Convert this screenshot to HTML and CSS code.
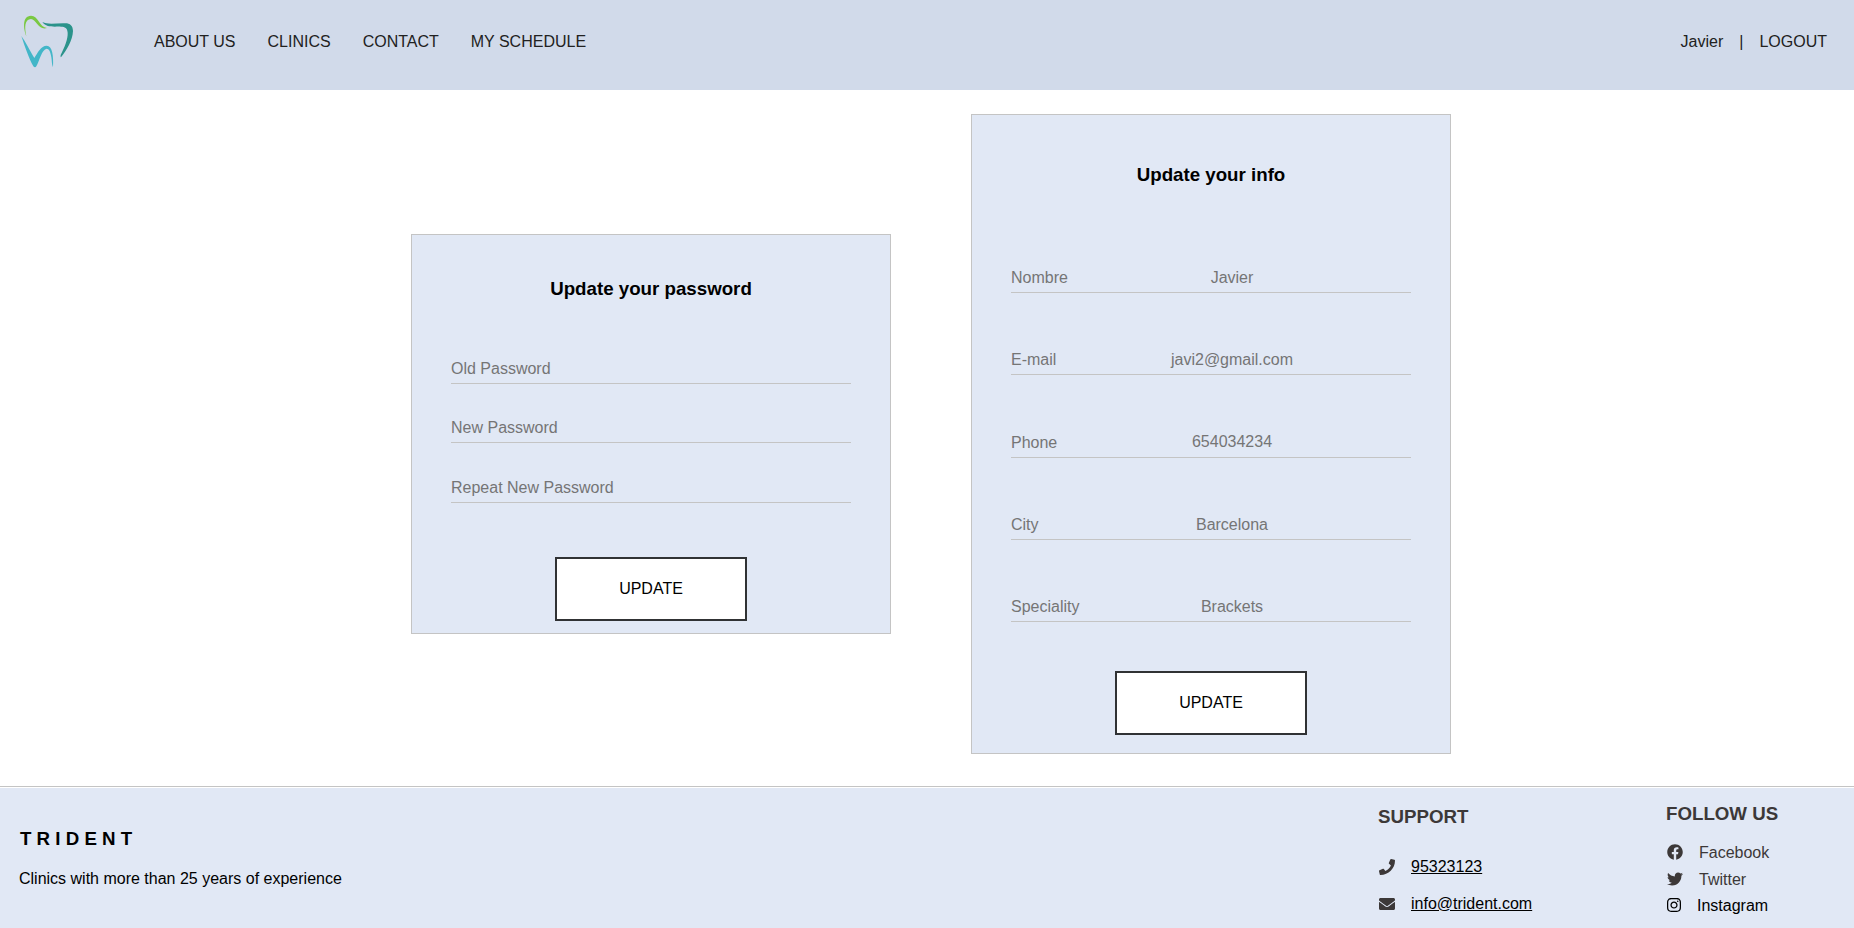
FILE: index.html
```html
<!DOCTYPE html>
<html lang="en">
<head>
<meta charset="utf-8">
<title>Trident</title>
<link rel="stylesheet" href="styles.css">
</head>
<body>
<header class="header">
  <svg class="logo" viewBox="48 36 192 192" aria-label="Trident">
    <path fill="#7ac843" d="M79 109C70 85 66 48 93 47c22 0 26 35 48 37-25 8-33-26-48-27-19 1-20 24-14 52z"/>
    <path fill="#2b938b" d="M127 66c17 9 42 3 69 4 14 0 23 8 23 23-1 27-19 58-36 79-2-1-1-5-1-7 12-24 22-48 21-67-1-14-8-18-20-18-21-1-43 4-56-14z"/>
    <path fill="#43b6c8" d="M64 108c12 16 25 42 39 66 10-16 20-37 37-37 17 1 21 29 19 65-4-9-3-19-5-30-3-18-7-26-14-26-14 1-22 37-31 53-2 4-6 4-9 0-13-23-26-61-36-91z"/>
  </svg>
  <nav class="nav">
    <a>ABOUT US</a><a>CLINICS</a><a>CONTACT</a><a>MY SCHEDULE</a>
  </nav>
  <div class="account"><a>Javier</a><span>|</span><a>LOGOUT</a></div>
</header>

<main class="main">
  <form class="card card-password">
    <h3>Update your password</h3>
    <div class="fields">
      <input class="field" type="password" placeholder="Old Password">
      <input class="field" type="password" placeholder="New Password">
      <input class="field" type="password" placeholder="Repeat New Password">
    </div>
    <button class="update" type="button">UPDATE</button>
  </form>
  <form class="card card-info">
    <h3>Update your info</h3>
    <div class="fields">
      <div class="field info"><span>Nombre</span><span class="value">Javier</span></div>
      <div class="field info"><span>E-mail</span><span class="value">javi2@gmail.com</span></div>
      <div class="field info"><span>Phone</span><span class="value value-phone">654034234</span></div>
      <div class="field info"><span>City</span><span class="value">Barcelona</span></div>
      <div class="field info"><span>Speciality</span><span class="value">Brackets</span></div>
    </div>
    <button class="update" type="button">UPDATE</button>
  </form>
</main>

<footer class="footer">
  <section class="brand">
    <h3>T R I D E N T</h3>
    <p>Clinics with more than 25 years of experience</p>
  </section>
  <section class="support">
    <h3>SUPPORT</h3>
    <div class="contact">
      <svg class="icon" viewBox="0 0 512 512"><path d="M493.4 24.6l-104-24c-11.3-2.6-22.9 3.3-27.5 13.9l-48 112c-4.2 9.8-1.4 21.3 6.9 28l60.6 49.6c-36 76.7-98.9 140.5-177.2 177.2l-49.6-60.6c-6.8-8.3-18.2-11.1-28-6.900l-112 48C3.900 366.500-2 378.100.6 389.400l24 104C27.100 504.200 36.700 512 48 512c256.100 0 464-207.500 464-464 0-11.200-7.700-20.900-18.600-23.400z"/></svg>
      <a>95323123</a>
    </div>
    <div class="contact">
      <svg class="icon" viewBox="0 0 512 512"><path d="M502.300 190.800c3.900-3.100 9.700-.2 9.700 4.700V400c0 26.500-21.500 48-48 48H48c-26.500 0-48-21.500-48-48V195.600c0-5 5.700-7.800 9.700-4.700 22.400 17.400 52.100 39.500 154.100 113.600 21.100 15.400 56.700 47.800 92.200 47.600 35.700.3 72-32.800 92.300-47.600 102-74.100 131.600-96.300 154-113.700zM256 320c23.200.4 56.600-29.200 73.400-41.400 132.700-96.300 142.800-104.700 173.400-128.700 5.800-4.500 9.200-11.500 9.200-18.900v-19c0-26.500-21.500-48-48-48H48c-26.500 0-48 21.500-48 48v19c0 7.400 3.400 14.300 9.200 18.900 30.600 23.900 40.700 32.400 173.400 128.700 16.800 12.200 50.200 41.800 73.400 41.400z"/></svg>
      <a>info@trident.com</a>
    </div>
  </section>
  <section class="social">
    <h3>FOLLOW US</h3>
    <div class="network">
      <svg class="icon" viewBox="0 0 512 512"><path d="M504 256C504 119 393 8 256 8S8 119 8 256c0 123.780 90.690 226.380 209.250 245V327.690h-63V256h63v-54.640c0-62.150 37-96.480 93.670-96.480 27.140 0 55.520 4.840 55.520 4.840v61h-31.280c-30.800 0-40.410 19.120-40.410 38.730V256h68.780l-11 71.690h-57.780V501C413.310 482.380 504 379.780 504 256z"/></svg>
      <span>Facebook</span>
    </div>
    <div class="network">
      <svg class="icon" viewBox="0 0 512 512"><path d="M459.370 151.716c.325 4.548.325 9.097.325 13.645 0 138.720-105.583 298.558-298.558 298.558-59.452 0-114.680-17.219-161.137-47.106 8.447.974 16.568 1.299 25.340 1.299 49.055 0 94.213-16.568 130.274-44.832-46.132-.975-84.792-31.188-98.112-72.772 6.498.974 12.995 1.624 19.818 1.624 9.421 0 18.843-1.300 27.614-3.573-48.081-9.747-84.143-51.980-84.143-102.985v-1.299c13.969 7.797 30.214 12.670 47.431 13.319-28.264-18.843-46.781-51.005-46.781-87.391 0-19.492 5.197-37.360 14.294-52.954 51.655 63.675 129.300 105.258 216.365 109.807-1.624-7.797-2.599-15.918-2.599-24.040 0-57.828 46.782-104.934 104.934-104.934 30.213 0 57.502 12.670 76.670 33.137 23.715-4.548 46.456-13.320 66.599-25.340-7.798 24.366-24.366 44.833-46.132 57.827 21.117-2.273 41.584-8.122 60.426-16.243-14.292 20.791-32.161 39.308-52.628 54.253z"/></svg>
      <span>Twitter</span>
    </div>
    <div class="network network-dark">
      <svg class="icon icon-narrow" viewBox="0 0 448 512"><path fill-rule="evenodd" d="M224.100 141c-63.600 0-114.900 51.300-114.900 114.900s51.300 114.900 114.900 114.900S339 319.500 339 255.900 287.700 141 224.100 141zm0 189.600c-41.100 0-74.700-33.500-74.700-74.700s33.500-74.700 74.700-74.700 74.700 33.500 74.700 74.700-33.600 74.700-74.700 74.700zm146.400-194.300c0 14.900-12 26.800-26.800 26.800-14.900 0-26.800-12-26.800-26.800s12-26.800 26.800-26.800 26.800 12 26.800 26.800zm76.100 27.200c-1.700-35.900-9.900-67.700-36.200-93.900-26.200-26.200-58-34.400-93.900-36.200-37-2.100-147.900-2.100-184.900 0-35.800 1.700-67.600 9.900-93.900 36.100s-34.400 58-36.200 93.900c-2.100 37-2.100 147.900 0 184.900 1.700 35.900 9.900 67.700 36.200 93.900s58 34.400 93.900 36.200c37 2.100 147.900 2.100 184.900 0 35.900-1.700 67.700-9.900 93.900-36.200 26.200-26.200 34.400-58 36.200-93.900 2.100-37 2.100-147.800 0-184.800zM398.800 388c-7.800 19.600-22.900 34.700-42.600 42.600-29.500 11.700-99.500 9-132.100 9s-102.700 2.600-132.100-9c-19.600-7.800-34.700-22.900-42.600-42.600-11.700-29.500-9-99.500-9-132.100s-2.600-102.700 9-132.100c7.800-19.600 22.900-34.700 42.600-42.600 29.500-11.700 99.500-9 132.100-9s102.700-2.600 132.100 9c19.600 7.800 34.700 22.900 42.600 42.600 11.700 29.500 9 99.500 9 132.100s2.700 102.700-9 132.100z"/></svg>
      <span>Instagram</span>
    </div>
  </section>
</footer>
</body>
</html>
```

FILE: styles.css
```css
* { box-sizing: border-box; }

body {
  margin: 0;
  background: #fff;
  color: #000;
  font: 16px/18px "Liberation Sans", Arial, sans-serif;
}

h3, p { margin: 0; }
h3 { font-size: 18.72px; line-height: 21px; }

.header {
  display: flex;
  height: 90px;
  padding: 12px 27px 0 16px;
  background: #d1daea;
  color: #212121;
}
.logo { width: 64px; height: 64px; }
.nav {
  display: flex;
  gap: 32px;
  margin-left: 74px;
  padding-top: 21px;
}
.account {
  display: flex;
  gap: 16px;
  margin-left: auto;
  padding-top: 21px;
}

.main {
  display: flex;
  justify-content: center;
  align-items: center;
  gap: 80px;
  height: 696px;
  padding: 24px 0 32px 8px;
}
.card {
  display: flex;
  flex-direction: column;
  align-items: center;
  width: 480px;
  border: 1px solid #c4c4c4;
  background: #e1e8f5;
}
.card-password { height: 400px; padding-top: 43px; }
.card-info { height: 640px; padding-top: 49px; }

.fields {
  display: grid;
  align-items: end;
  width: 400px;
}
.card-password .fields { grid-template-rows: 85px 59px 60px; }
.card-info .fields { grid-template-rows: 108px 82px 83px 82px 82px; }

.field {
  width: 100%;
  height: 25px;
  padding: 1px 0 5px;
  border: 0;
  border-bottom: 1px solid #c4c4c4;
  background: transparent;
  color: #757575;
  font: inherit;
}
.field::placeholder { color: #757575; opacity: 1; }
.info {
  display: grid;
  grid-template-columns: 130px 182px;
}
.value { text-align: center; }
.value-phone { margin-top: -1px; }

.update {
  width: 192px;
  height: 64px;
  padding: 0;
  border: 2px solid #303234;
  background: #fff;
  color: #000;
  font: inherit;
}
.card-password .update { margin-top: 54px; }
.card-info .update { margin-top: 49px; }

.footer {
  display: flex;
  height: 142px;
  padding-left: 19px;
  border-top: 1px solid #c4c4c4;
  background: linear-gradient(#fff 1px, #e1e8f5 1px);
}
.brand { width: 1360px; padding-top: 41px; }
.brand h3 { padding-left: 1px; }
.brand p { margin-top: 21px; }

.support { width: 288px; padding-top: 19px; }
.social { padding-top: 16px; }
.support h3, .social h3 {
  margin-left: -1px;
  color: #3c3838;
}

.icon { width: 16px; height: 16px; fill: #3c3838; }
.icon-narrow { width: 14px; }

.contact {
  display: flex;
  align-items: center;
  gap: 16px;
  height: 18px;
}
.contact a { text-decoration: underline; }
.contact:nth-of-type(1) { margin-top: 31px; }
.contact:nth-of-type(2) { margin-top: 19px; }

.network {
  display: flex;
  align-items: center;
  gap: 16px;
  height: 18px;
  margin-top: 9px;
  color: #3c3838;
}
.network span { padding-top: 2px; }
.social h3 + .network { margin-top: 19px; }
.network-dark { margin-top: 8px; color: #000; }
.network-dark .icon { fill: #000; }
```
